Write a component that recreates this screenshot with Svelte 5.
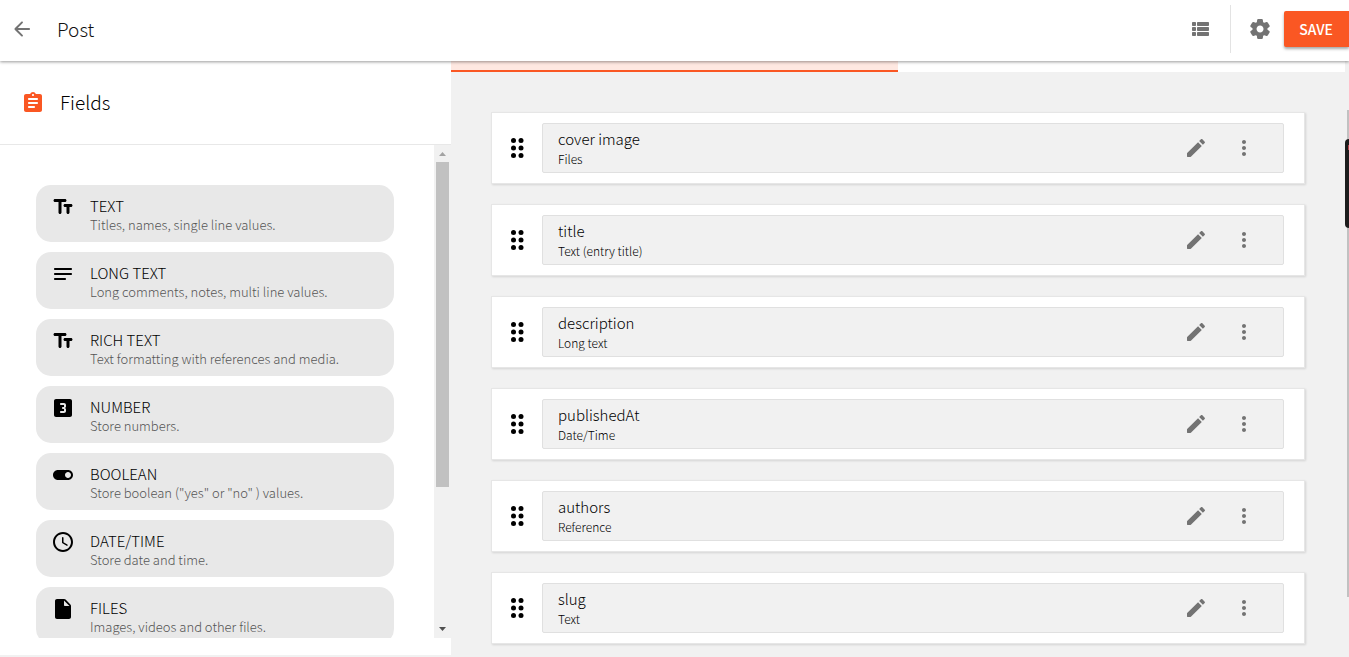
<script>
  const icons = {
    text: 'M2.5 5.5c0 .83.67 1.5 1.5 1.5h3.5v10.5c0 .83.67 1.5 1.5 1.5s1.5-.67 1.5-1.5V7H14c.83 0 1.5-.67 1.5-1.5S14.83 4 14 4H4c-.83 0-1.5.67-1.5 1.5zM20 9h-6c-.83 0-1.5.67-1.5 1.5S13.170 12 14 12h1.5v5.500c0 .83.67 1.500 1.500 1.500s1.500-.67 1.500-1.500V12H20c.83 0 1.500-.67 1.500-1.500S20.830 9 20 9z',
    long: 'M20 11H4c-.55 0-1 .45-1 1s.45 1 1 1h16c.55 0 1-.45 1-1s-.45-1-1-1zM4 18h10c.55 0 1-.45 1-1s-.45-1-1-1H4c-.55 0-1 .45-1 1s.45 1 1 1zM20 6H4c-.55 0-1 .45-1 1s.45 1 1 1h16c.55 0 1-.45 1-1s-.45-1-1-1z',
    number: 'M19 3H5c-1.1 0-2 .9-2 2v14c0 1.100.9 2 2 2h14c1.100 0 2-.9 2-2V5c0-1.100-.9-2-2-2zm-4 7.500c0 .83-.67 1.500-1.500 1.500.83 0 1.500.67 1.500 1.500V15c0 1.110-.9 2-2 2h-3c-.55 0-1-.45-1-1s.45-1 1-1h3v-2h-1c-.55 0-1-.45-1-1s.45-1 1-1h1V9h-3c-.55 0-1-.45-1-1s.45-1 1-1h3c1.100 0 2 .89 2 2v1.500z',
    boolean: 'M17 7H7c-2.760 0-5 2.240-5 5s2.240 5 5 5h10c2.760 0 5-2.240 5-5s-2.240-5-5-5zm0 8c-1.660 0-3-1.340-3-3s1.340-3 3-3 3 1.340 3 3-1.340 3-3 3z',
    date: 'M11.990 2C6.470 2 2 6.480 2 12s4.470 10 9.990 10C17.520 22 22 17.520 22 12S17.520 2 11.990 2zM12 20c-4.420 0-8-3.580-8-8s3.580-8 8-8 8 3.580 8 8-3.580 8-8 8zm-.22-13h-.06c-.4 0-.72.32-.72.72v4.720c0 .35.18.68.49.86l4.150 2.490c.34.2.78.1.98-.24.21-.34.1-.79-.25-.99l-3.870-2.300V7.720c0-.4-.32-.72-.72-.72z',
    file: 'M6 2c-1.100 0-1.990.9-1.990 2L4 20c0 1.100.89 2 1.990 2H18c1.100 0 2-.9 2-2V8.830c0-.53-.21-1.040-.59-1.410l-4.830-4.830c-.37-.38-.88-.59-1.410-.59H6zm7 6V3.500L18.500 9H14c-.55 0-1-.45-1-1z',
    gear: 'M19.500 12c0-.23-.01-.45-.03-.68l1.860-1.410c.4-.3.51-.86.26-1.300l-1.870-3.230c-.25-.44-.79-.62-1.250-.42l-2.150.91c-.37-.26-.76-.49-1.170-.68l-.29-2.310c-.06-.5-.49-.88-.99-.88h-3.730c-.51 0-.94.38-1 .88l-.29 2.310c-.41.19-.8.42-1.170.68l-2.150-.91c-.46-.2-1-.02-1.250.42L2.410 8.620c-.25.44-.14.99.26 1.300l1.860 1.410c-.02.22-.03.44-.03.67s.01.45.03.68l-1.860 1.410c-.4.3-.51.86-.26 1.300l1.870 3.230c.25.44.79.62 1.250.42l2.150-.91c.37.26.76.49 1.170.68l.29 2.310c.06.5.49.88.99.88h3.730c.5 0 .93-.38.99-.88l.29-2.310c.41-.19.8-.42 1.170-.68l2.150.91c.46.2 1 .02 1.250-.42l1.870-3.230c.25-.44.14-.99-.26-1.300l-1.860-1.410c.03-.23.04-.45.04-.68zm-7.460 3.500c-1.930 0-3.500-1.570-3.500-3.500s1.570-3.500 3.500-3.500 3.500 1.570 3.500 3.500-1.570 3.500-3.500 3.500z',
    back: 'M19 11H7.830l4.880-4.880c.39-.39.39-1.030 0-1.420-.39-.39-1.020-.39-1.410 0l-6.590 6.590c-.39.39-.39 1.020 0 1.410l6.590 6.590c.39.39 1.020.39 1.410 0 .39-.39.39-1.020 0-1.410L7.830 13H19c.55 0 1-.45 1-1s-.45-1-1-1z',
    clip: 'M19 3h-4.180C14.400 1.840 13.300 1 12 1s-2.400.84-2.820 2H5c-1.100 0-2 .9-2 2v14c0 1.100.9 2 2 2h14c1.100 0 2-.9 2-2V5c0-1.100-.9-2-2-2zm-7 0c.55 0 1 .45 1 1s-.45 1-1 1-1-.45-1-1 .45-1 1-1zm1 14H8c-.55 0-1-.45-1-1s.45-1 1-1h5c.55 0 1 .45 1 1s-.45 1-1 1zm3-4H8c-.55 0-1-.45-1-1s.45-1 1-1h8c.55 0 1 .45 1 1s-.45 1-1 1zm0-4H8c-.55 0-1-.45-1-1s.45-1 1-1h8c.55 0 1 .45 1 1s-.45 1-1 1z',
    list: 'M4 14h2c.55 0 1-.45 1-1v-2c0-.55-.45-1-1-1H4c-.55 0-1 .45-1 1v2c0 .55.45 1 1 1zm0 5h2c.55 0 1-.45 1-1v-2c0-.55-.45-1-1-1H4c-.55 0-1 .45-1 1v2c0 .55.45 1 1 1zM4 9h2c.55 0 1-.45 1-1V6c0-.55-.45-1-1-1H4c-.55 0-1 .45-1 1v2c0 .55.45 1 1 1zm5 5h10c.55 0 1-.45 1-1v-2c0-.55-.45-1-1-1H9c-.55 0-1 .45-1 1v2c0 .55.45 1 1 1zm0 5h10c.55 0 1-.45 1-1v-2c0-.55-.45-1-1-1H9c-.55 0-1 .45-1 1v2c0 .55.45 1 1 1zM8 6v2c0 .55.45 1 1 1h10c.55 0 1-.45 1-1V6c0-.55-.45-1-1-1H9c-.55 0-1 .45-1 1z',
    edit: 'M3 17.460v3.040c0 .28.22.5.5.5h3.040c.13 0 .26-.05.35-.15L17.810 9.940l-3.750-3.750L3.150 17.100c-.1.1-.15.22-.15.36zM20.710 7.040c.39-.39.39-1.020 0-1.410l-2.340-2.340c-.39-.39-1.020-.39-1.410 0l-1.830 1.830 3.750 3.750 1.830-1.830z',
    more: 'M12 8c1.100 0 2-.9 2-2s-.9-2-2-2-2 .9-2 2 .9 2 2 2zm0 2c-1.100 0-2 .9-2 2s.9 2 2 2 2-.9 2-2-.9-2-2-2zm0 6c-1.100 0-2 .9-2 2s.9 2 2 2 2-.9 2-2-.9-2-2-2z'
  };

  const types = [
    { icon: 'text', name: 'TEXT', about: 'Titles, names, single line values.' },
    { icon: 'long', name: 'LONG TEXT', about: 'Long comments, notes, multi line values.' },
    { icon: 'text', name: 'RICH TEXT', about: 'Text formatting with references and media.' },
    { icon: 'number', name: 'NUMBER', about: 'Store numbers.' },
    { icon: 'boolean', name: 'BOOLEAN', about: 'Store boolean ("yes" or "no" ) values.' },
    { icon: 'date', name: 'DATE/TIME', about: 'Store date and time.' },
    { icon: 'file', name: 'FILES', about: 'Images, videos and other files.' }
  ];

  const fields = [
    { name: 'cover image', kind: 'Files' },
    { name: 'title', kind: 'Text (entry title)' },
    { name: 'description', kind: 'Long text' },
    { name: 'publishedAt', kind: 'Date/Time' },
    { name: 'authors', kind: 'Reference' },
    { name: 'slug', kind: 'Text' }
  ];
</script>

{#snippet icon(name)}
  <svg class="icon" viewBox="0 0 24 24" aria-hidden="true"><path d={icons[name]} /></svg>
{/snippet}

<div class="page">
  <header>
    <button class="tool" aria-label="Back">{@render icon('back')}</button>
    <h1>Post</h1>
    <button class="tool list" aria-label="Entries">{@render icon('list')}</button>
    <div class="settings">
      <button class="tool" aria-label="Settings">{@render icon('gear')}</button>
    </div>
    <button class="save">SAVE</button>
  </header>

  <div class="body">
    <aside>
      <div class="heading">
        {@render icon('clip')}
        <h2>Fields</h2>
      </div>
      <div class="scroller">
        <ul class="types">
          {#each types as t}
            <li>
              {@render icon(t.icon)}
              <div>
                <div class="type-name">{t.name}</div>
                <div class="type-about">{t.about}</div>
              </div>
            </li>
          {/each}
        </ul>
        <div class="track">
          <svg class="arrow up" viewBox="0 0 17 17"><path d="M5 11h7L8.500 7z" /></svg>
          <div class="thumb"></div>
          <svg class="arrow down" viewBox="0 0 17 17"><path d="M5 6h7l-3.500 4z" /></svg>
        </div>
      </div>
    </aside>

    <main>
      <div class="tabs"><div class="tab"></div></div>
      <div class="fields">
        {#each fields as f}
          <section class="card">
            <svg class="grip" viewBox="0 0 14 22" aria-hidden="true">
              {#each [3.500, 11, 18.500] as y}
                <circle cx="3.500" cy={y} r="2.500" />
                <circle cx="11" cy={y} r="2.500" />
              {/each}
            </svg>
            <div class="field">
              <div class="label">
                <div class="field-name">{f.name}</div>
                <div class="field-kind">{f.kind}</div>
              </div>
              <button class="tool" aria-label="Edit {f.name}">{@render icon('edit')}</button>
              <button class="tool" aria-label="More actions for {f.name}">{@render icon('more')}</button>
            </div>
          </section>
        {/each}
      </div>
    </main>

    <div class="page-track"><div class="page-thumb"></div></div>
  </div>
  <div class="side-panel"></div>
</div>

<style>
  :global(body) {
    margin: 0;
    background: #f1f1f1;
    font-family: "Noto Sans CJK SC", "Noto Sans", sans-serif;
  }
  .page {
    position: relative;
    display: flex;
    flex-direction: column;
    height: 100vh;
    overflow: hidden;
  }
  h1, h2 { margin: 0; font-size: 19px; line-height: 28px; font-weight: 300; }
  .icon { display: block; width: 24px; height: 24px; fill: currentColor; flex: none; }
  .tool {
    display: flex;
    align-items: center;
    justify-content: center;
    width: 48px;
    height: 48px;
    padding: 0;
    border: 0;
    background: none;
    color: #737373;
    flex: none;
  }
  header {
    position: relative;
    z-index: 1;
    display: flex;
    align-items: center;
    box-sizing: border-box;
    height: 61px;
    flex: none;
    padding-bottom: 3px;
    background: #fff;
    box-shadow: 0 1px 3px rgba(0, 0, 0, 0.4);
  }
  header > .tool:first-child { width: 44px; }
  h1 {
    flex: 1;
    padding-left: 13px;
    color: #111;
  }
  .list { margin-right: 5px; }
  .settings { padding-left: 5px; border-left: 1px solid #e3e3e3; }
  .save {
    height: 36px;
    padding: 0 16px 0 15px;
    border: 0;
    border-radius: 2px 0 0 2px;
    background: #fa5723;
    color: #fff;
    font: 500 14px/36px "Noto Sans CJK SC", "Noto Sans", sans-serif;
    box-shadow: 0 2px 3px rgba(0, 0, 0, 0.35);
  }
  .body { display: flex; flex: 1; min-height: 0; }
  aside {
    display: flex;
    flex-direction: column;
    flex: 0 0 451px;
    box-sizing: border-box;
    margin-bottom: 2px;
    padding-bottom: 17px;
    background: #fff;
  }
  .heading {
    display: flex;
    align-items: center;
    gap: 15px;
    height: 83px;
    flex: none;
    padding-left: 21px;
    border-bottom: 1px solid #e8e8e8;
    color: #fa5723;
  }
  h2 { padding-bottom: 2px; color: #000; }
  .scroller { display: flex; flex: 1; min-height: 0; }
  .types {
    display: flex;
    flex-direction: column;
    gap: 10px;
    flex: 1;
    margin: 0;
    padding: 40px 40px 0 36px;
    list-style: none;
    overflow: hidden;
  }
  .types li {
    display: flex;
    gap: 15px;
    box-sizing: border-box;
    height: 57px;
    flex: none;
    padding: 10px 15px;
    border-radius: 15px;
    background: #e8e8e8;
  }
  .type-name { font-size: 15px; line-height: 22px; font-weight: 300; color: #000; }
  .type-about { font-size: 13px; line-height: 16px; font-weight: 300; color: #555; }
  .track { display: flex; flex-direction: column; width: 17px; background: #f1f1f1; }
  .arrow { width: 17px; height: 17px; flex: none; }
  .up { fill: #a3a3a3; }
  .down { margin-top: auto; fill: #505050; }
  .thumb { height: 66%; margin: 0 2px; background: #c1c1c1; }
  main { flex: 1; min-width: 0; overflow: hidden; }
  .tabs { height: 11px; background: #fff; }
  .tab {
    box-sizing: border-box;
    width: 50%;
    height: 100%;
    border-bottom: 2px solid #fa5723;
    background: #ffe8e1;
  }
  .fields { display: flex; flex-direction: column; gap: 20px; padding: 40px; }
  .card {
    display: flex;
    align-items: center;
    gap: 18px;
    box-sizing: border-box;
    height: 72px;
    padding: 0 20px 0 18px;
    border: 1px solid #e6e6e6;
    background: #fff;
    box-shadow: 1px 1px 2px rgba(0, 0, 0, 0.12);
  }
  .grip { width: 14px; height: 22px; flex: none; }
  .field {
    display: flex;
    align-items: center;
    flex: 1;
    box-sizing: border-box;
    height: 50px;
    padding: 0 15px;
    border: 1px solid #e0e0e0;
    border-radius: 2px;
    background: #f1f1f1;
  }
  .label { flex: 1; }
  .field-name { font-size: 15px; line-height: 22px; font-weight: 300; color: #000; }
  .field-kind { font-size: 12px; line-height: 18px; font-weight: 300; color: #000; }
  .page-track { width: 4px; flex: none; padding-top: 49px; background: #f1f1f1; }
  .page-thumb { height: 89%; margin-left: 2px; background: #c1c1c1; }
  .side-panel {
    position: absolute;
    z-index: 2;
    top: 139px;
    right: 0;
    width: 4px;
    height: 89px;
    border-radius: 4px 0 0 4px;
    background: linear-gradient(#b5484f, #b5484f) 3px 6px / 1px 5px no-repeat #1c1c1c;
  }
</style>
